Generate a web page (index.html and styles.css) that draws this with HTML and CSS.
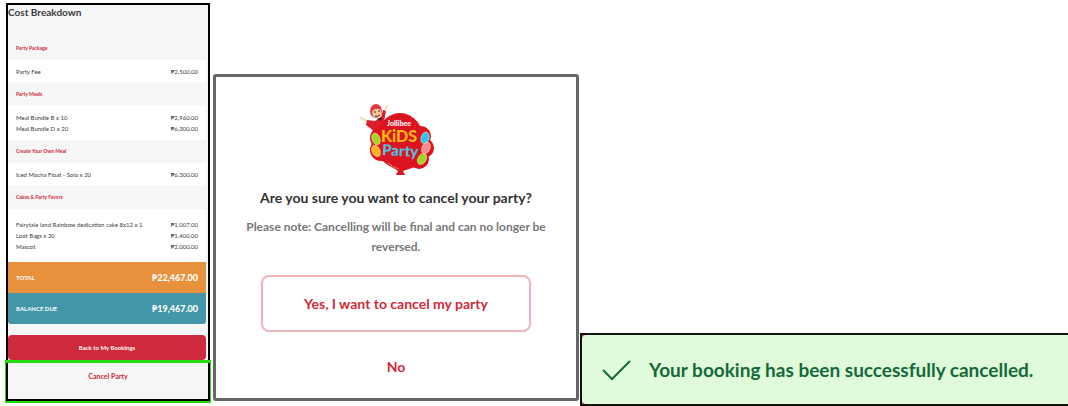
FILE: index.html
```html
<!DOCTYPE html>
<html lang="en">
<head>
  <meta charset="UTF-8" />
  <meta name="viewport" content="width=device-width, initial-scale=1.0"/>
  <title>Cancel Party</title>
  <link rel="stylesheet" href="styles.css">
</head>
<body>
  <main class="steps">
    <section class="breakdown">
      <h2>Cost Breakdown</h2>
      <table class="costs">
        <tbody>
          <tr class="group"><th colspan="2">Party Package</th></tr>
          <tr class="first last"><td>Party Fee</td><td>₱2,500.00</td></tr>
        </tbody>
        <tbody>
          <tr class="group"><th colspan="2">Party Meals</th></tr>
          <tr class="first"><td>Meal Bundle B x 10</td><td>₱2,960.00</td></tr>
          <tr class="last"><td>Meal Bundle D x 20</td><td>₱6,300.00</td></tr>
        </tbody>
        <tbody>
          <tr class="group"><th colspan="2">Create Your Own Meal</th></tr>
          <tr class="first last"><td>Iced Mocha Float - Solo x 20</td><td>₱6,300.00</td></tr>
        </tbody>
        <tbody class="favors">
          <tr class="group"><th colspan="2">Cakes &amp; Party Favors</th></tr>
          <tr class="first"><td>Fairytale land Rainbow dedication cake 8x12 x 1</td><td>₱1,007.00</td></tr>
          <tr><td>Loot Bags x 20</td><td>₱1,400.00</td></tr>
          <tr class="last"><td>Mascot</td><td>₱2,000.00</td></tr>
        </tbody>
      </table>
      <div class="sum total"><span>TOTAL</span><strong>₱22,467.00</strong></div>
      <div class="sum balance"><span>BALANCE DUE</span><strong>₱19,467.00</strong></div>
      <button class="btn-back" type="button">Back to My Bookings</button>
      <div class="cancel-area">
        <button class="btn-link" type="button">Cancel Party</button>
      </div>
    </section>

    <section class="dialog" role="dialog" aria-labelledby="dialogTitle">
      <svg class="logo" viewBox="0 0 78 74" role="img" aria-label="Jollibee Kids Party">
        <!-- mascot -->
        <g transform="translate(3 -1)">
          <path d="M1 18l8 4M23 13l4-7" stroke="#f6dcae" stroke-width="2" stroke-linecap="round"/>
          <path d="M7 20l8 1 6-4 2-7 3 1-2 11 3 6-9 7-8-7-4-3z" fill="#dd1f2b"/>
          <ellipse cx="16" cy="11" rx="6" ry="7" fill="#e03a43"/>
          <path d="M12 11q5-4 9-1l1 5q-4 5-9 1z" fill="#f4c9a2"/>
          <path d="M15 11v2M19 10v2M15 16q3 1 5-1" stroke="#4a2520" fill="none"/>
          <path d="M17 19l5-2-1 4z" fill="#3b2322"/>
        </g>
        <!-- big balloon -->
        <g fill="#dc1420">
          <ellipse cx="43" cy="40" rx="24" ry="28"/>
          <circle cx="24" cy="37" r="11"/>
          <circle cx="24" cy="49" r="11"/>
          <circle cx="64" cy="35" r="10"/>
          <circle cx="67" cy="47" r="10"/>
          <circle cx="62" cy="58" r="10"/>
          <path d="M24 59l17 11-2 4h9l-2-4 18-6z"/>
        </g>
        <!-- small balloons -->
        <g stroke-width="0.5" stroke="#fff4c4">
          <ellipse cx="19" cy="38" rx="4" ry="6" fill="#a5d321" transform="rotate(-20 19 38)"/>
          <ellipse cx="19" cy="50" rx="4" ry="6" fill="#fbb21b" transform="rotate(-25 19 50)"/>
          <ellipse cx="68" cy="37" rx="4" ry="6" fill="#2fc4f1" transform="rotate(15 68 37)"/>
          <ellipse cx="69" cy="47" rx="4" ry="6" fill="#f58a95" transform="rotate(25 69 47)"/>
          <ellipse cx="65" cy="58" rx="4" ry="6" fill="#a5d321" transform="rotate(30 65 58)"/>
        </g>
        <text x="42" y="25" class="logo-brand">Jollibee</text>
        <text x="42" y="41" class="logo-kids">KiDS</text>
        <text x="43" y="55" class="logo-party" transform="rotate(3 43 55)">Party</text>
        <path d="M31 62q4 4 11 6" stroke="#f9b6b8" stroke-dasharray="2 1" fill="none"/>
      </svg>
      <h3 id="dialogTitle">Are you sure you want to cancel your party?</h3>
      <p>Please note: Cancelling will be final and can no longer be reversed.</p>
      <button class="btn-confirm" type="button">Yes, I want to cancel my party</button>
      <button class="btn-no" type="button">No</button>
    </section>

    <div class="toast" role="status">
      <div class="toast-body">
        <svg class="check" viewBox="0 0 30 22" aria-hidden="true">
          <path d="M2 11L11 20L29 2" fill="none" stroke="#14693a" stroke-width="2"/>
        </svg>
        <span>Your booking has been successfully cancelled.</span>
      </div>
    </div>
  </main>
</body>
</html>
```
FILE: styles.css
```css
:root {
  --red: #cf2a3b;
  --orange: #e8913c;
  --teal: #4296a8;
  --grey: #f6f6f6;
  --text: #3a3a3c;
  --green: #14693a;
  --mint: #e0fbd9;
}

* {
  box-sizing: border-box;
}

body {
  margin: 0;
  padding: 3px 0 0 6px;
  background-color: #fff;
  color: var(--text);
  font-family: Lato, "Liberation Sans", sans-serif;
}

h2, h3, p {
  margin: 0;
}

button {
  border: none;
  background: none;
  padding: 0;
  font-family: inherit;
  font-weight: bold;
  color: var(--red);
  cursor: pointer;
}

.steps {
  display: grid;
  grid-template-columns: 207fr 367fr 488fr;
  align-items: end;
}

/* cost breakdown */
.breakdown {
  margin: 0 3px 5px 0;
  border: 2px solid #000;
  background-color: var(--grey);
}

.breakdown h2 {
  height: 32px;
  font-size: 10px;
  line-height: 14px;
}

.costs {
  width: calc(100% - 2px);
  border-collapse: collapse;
  background-color: #fff;
  font-size: 6px;
  line-height: 11px;
  white-space: nowrap;
}

.costs th,
.costs td {
  padding: 0 8px;
  text-align: left;
}

.costs td:last-child {
  padding-left: 0;
  text-align: right;
}

.costs .group th {
  padding: 6px 8px;
  background-color: var(--grey);
  color: var(--red);
  font-size: 5px;
}

.costs .first td {
  padding-top: 6px;
}

.costs .last td {
  padding-bottom: 6px;
}

.costs .favors .first td {
  padding-top: 10px;
}

.costs .favors .last td {
  padding-bottom: 10px;
}

.sum {
  display: flex;
  justify-content: space-between;
  align-items: center;
  height: 31px;
  margin-right: 2px;
  padding: 0 8px;
  color: #fff;
  font-size: 6px;
  font-weight: bold;
}

.sum strong {
  font-size: 9px;
  font-weight: 900;
}

.total {
  background-color: var(--orange);
}

.balance {
  border-radius: 0 0 3px 3px;
  background-color: var(--teal);
}

.btn-back {
  display: block;
  width: calc(100% - 2px);
  height: 25px;
  margin-top: 11px;
  border-radius: 4px;
  background-color: var(--red);
  color: #fff;
  font-size: 6px;
}

.cancel-area {
  position: relative;
  height: 39px;
  padding-top: 9px;
  text-align: center;
}

/* highlight frame around the cancel link */
.cancel-area::after {
  content: "";
  position: absolute;
  inset: 0 -3px -4px;
  border: solid #22dd0a;
  border-width: 3px 1px 2px;
  pointer-events: none;
}

.btn-link {
  display: block;
  width: 100%;
  font-size: 7px;
  line-height: 14px;
}

/* confirmation dialog */
.dialog {
  display: flex;
  flex-direction: column;
  align-items: center;
  margin: 0 1px 5px 0;
  padding: 24px 24px 21px;
  border: 3px solid #666;
  border-radius: 3px;
  text-align: center;
}

.logo {
  width: 78px;
  height: 74px;
}

.logo text {
  font-weight: 900;
  text-anchor: middle;
}

.logo-brand {
  fill: #fff;
  font-size: 7px;
}

.logo-kids {
  fill: #fdb913;
  font-size: 16px;
}

.logo-party {
  fill: #4cc3e0;
  font-size: 15px;
}

.dialog h3 {
  margin-top: 13px;
  color: #333;
  font-size: 14px;
  line-height: 20px;
}

.dialog p {
  margin-top: 9px;
  color: #777;
  font-size: 12px;
  font-weight: bold;
  line-height: 20px;
}

.btn-confirm {
  width: 270px;
  height: 57px;
  margin-top: 18px;
  border: 2px solid #f0b3b9;
  border-radius: 8px;
  font-size: 14px;
}

.btn-no {
  margin-top: 25px;
  font-size: 14px;
  line-height: 20px;
}

/* success message */
.toast {
  border: solid #111;
  border-width: 2px 0 2px 2px;
  background-color: var(--red);
}

.toast-body {
  display: flex;
  align-items: center;
  gap: 18px;
  height: 69px;
  padding: 0 19px;
  border-radius: 4px 0 0 4px;
  background-color: var(--mint);
  color: var(--green);
  font-size: 19px;
  font-weight: bold;
  white-space: nowrap;
}

.check {
  width: 30px;
  height: 22px;
}
```
